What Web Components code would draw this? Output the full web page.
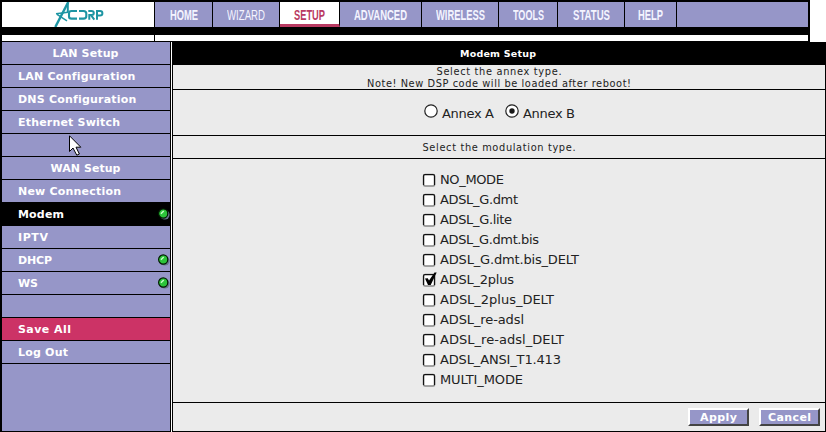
<!DOCTYPE html>
<html lang="en">
<head>
<meta charset="utf-8">
<title>Acorp - Modem Setup</title>
<style>
html,body{margin:0;width:826px;height:432px;overflow:hidden;background:#fff}
body{font-family:"DejaVu Sans",Verdana,sans-serif}
</style>
</head>
<body>
<router-page></router-page>
<script>
const define = (name, html, setup) => {
  const t = document.createElement('template');
  t.innerHTML = html;
  customElements.define(name, class extends HTMLElement {
    connectedCallback() {
      if (this.shadowRoot) return;
      this.attachShadow({mode: 'open'}).append(t.content.cloneNode(true));
      if (setup) setup(this, this.shadowRoot);
    }
  });
};

/* Text set to a fixed width: by tracking, or by condensing with the "narrow" attribute */
define('fit-text', `<style>
:host{display:inline-block;white-space:nowrap;text-align:left;flex:none}
span{display:inline-block;transform-origin:0 50%}
</style><span><slot></slot></span>`, (el, root) => {
  const w = +el.getAttribute('w'), s = root.querySelector('span');
  const n = s.getBoundingClientRect().width;
  if (el.hasAttribute('narrow')) s.style.transform = `scaleX(${w / n})`;
  else s.style.letterSpacing = `${(w - n) / Math.max(1, el.textContent.length - 1)}px`;
  el.style.width = w + 'px';
});

define('acorp-logo', `<style>:host{display:block;width:50px;height:25px}svg{display:block}</style>
<svg width="50" height="25" viewBox="54 2 50 25" fill="none" stroke="#1d95a3">
<path d="M68.3 2 55.3 27" stroke-width="2.4"/>
<path d="M67.8 3V12" stroke-width="2"/>
<path d="M56 13.8 68 12.2M57 14.4 67 20.8" stroke-width="1.5"/>
<path d="M77 11H71.5Q69 11 69 13.4V16.4Q69 18.6 71.5 18.6H77" stroke-width="2.1"/>
<path d="M79 11H83.5Q86.3 11 86.3 13.6V16.2Q86.3 18.6 83.5 18.6H79" stroke-width="2.1"/>
<path d="M89.3 19.8V15H91.7Q93.8 15 93.8 13T91.5 11H88.3M91 15.2 94.3 19.6" stroke-width="2"/>
<path d="M97 19.8V11H100Q102.4 11 102.4 13.2T100 15.4H97" stroke-width="2"/>
</svg>`);

define('nav-tab', `<style>
:host{display:flex;box-sizing:border-box;height:25px;border-right:1px solid #000;background:#9696c8;color:#f4f4ff;
font:bold 15.5px/25px "Liberation Sans",Arial,sans-serif;justify-content:center}
:host([light]){font-weight:normal}
:host([on]){background:#fff;color:#b93a62;border-bottom:3px solid #b93a62}
</style><slot></slot>`);

define('top-bar', `<style>
:host{display:block;box-sizing:border-box;width:810px;height:42px;background:#000;padding:2px 2px 0}
.bar{display:flex;height:25px}
.logo{width:152px;background:#fff;border-right:1px solid #000;display:flex}
acorp-logo{margin-left:52px}
.strip{display:flex;margin-top:8px;height:6px;gap:1px}
.strip i{background:#fff;width:152px}.strip i+i{flex:1;width:auto}
</style><div class="bar"><div class="logo"><acorp-logo></acorp-logo></div>
<nav-tab style="width:58px"><fit-text narrow w="28">HOME</fit-text></nav-tab>
<nav-tab light style="width:67px"><fit-text narrow w="38">WIZARD</fit-text></nav-tab>
<nav-tab on style="width:60px"><fit-text narrow w="31">SETUP</fit-text></nav-tab>
<nav-tab style="width:82px"><fit-text narrow w="53">ADVANCED</fit-text></nav-tab>
<nav-tab style="width:77px"><fit-text narrow w="49">WIRELESS</fit-text></nav-tab>
<nav-tab style="width:59px"><fit-text narrow w="31">TOOLS</fit-text></nav-tab>
<nav-tab style="width:67px"><fit-text narrow w="37">STATUS</fit-text></nav-tab>
<nav-tab style="width:52px"><fit-text narrow w="25">HELP</fit-text></nav-tab>
<nav-tab style="flex:1;border:0"></nav-tab></div>
<div class="strip"><i></i><i></i></div>`);

define('status-led', `<style>:host{display:block;width:12px;height:12px}svg{display:block}</style>
<svg width="12" height="12"><circle cx="6.8" cy="6.8" r="4.8" fill="#66758b"/><circle cx="5.2" cy="5.5" r="4.6" fill="#2cc43a" stroke="#001a00" stroke-width="1.2"/><path d="M2.9 5.7 5.7 3" stroke="#c9ffc9" stroke-width="1.4"/></svg>`);

define('menu-row', `<style>
:host{display:flex;box-sizing:border-box;height:23px;border-bottom:1px solid #000;padding:1px 0 0 16px;align-items:center;
color:#fff;font-weight:bold;font-size:11px;line-height:21px}
:host([head]){justify-content:center;padding:1px 1px 0 0}
:host([on]){background:#000}
:host([save]){background:#cc3366}
::slotted(status-led){margin:-1px 0 0 auto}
</style><slot></slot>`);

define('side-menu', `<style>
:host{display:block;box-sizing:border-box;width:171px;height:390px;border:solid #000;border-width:0 1px 1px 2px;background:#9696c8;position:relative}
svg{position:absolute;left:67px;top:93px}
</style>
<menu-row head><fit-text w="66">LAN Setup</fit-text></menu-row>
<menu-row><fit-text w="117">LAN Configuration</fit-text></menu-row>
<menu-row><fit-text w="118">DNS Configuration</fit-text></menu-row>
<menu-row><fit-text w="102">Ethernet Switch</fit-text></menu-row>
<menu-row></menu-row>
<menu-row head><fit-text w="70">WAN Setup</fit-text></menu-row>
<menu-row><fit-text w="103">New Connection</fit-text></menu-row>
<menu-row on><fit-text w="46">Modem</fit-text><status-led></status-led></menu-row>
<menu-row><fit-text w="30">IPTV</fit-text></menu-row>
<menu-row><fit-text w="34">DHCP</fit-text><status-led></status-led></menu-row>
<menu-row><fit-text w="20">WS</fit-text><status-led></status-led></menu-row>
<menu-row></menu-row>
<menu-row save><fit-text w="53">Save All</fit-text></menu-row>
<menu-row><fit-text w="50">Log Out</fit-text></menu-row>
<svg width="13" height="22"><path d="M.5 .8V16.5L4 13 7.8 20.2 10.4 19 7 12.2H11.8Z" fill="#fff" stroke="#000"/></svg>`);

define('radio-option', `<style>
:host{display:flex;align-items:center;font-size:13px;line-height:20px;color:#222;gap:4px}
svg{display:block;margin-bottom:6px}circle.dot{display:none}:host([checked]) .dot{display:block}
</style><svg width="14" height="14"><circle cx="7" cy="7" r="6.2" fill="#fff" stroke="#222" stroke-width="1.2"/><circle class="dot" cx="7" cy="7" r="2.7" fill="#1a1a1a"/></svg><slot></slot>`);

define('check-option', `<style>
:host{display:flex;align-items:center;font-size:13px;height:20px;line-height:20px;color:#222;gap:4px}
svg{display:block;overflow:visible}.tick{display:none}:host([checked]) .tick{display:block}
</style><svg width="14" height="14"><rect x="1.6" y="1.6" width="11" height="11.4" rx="1.5" fill="#fff" stroke="#888" stroke-width="1.6"/><path d="M1.5 12V3Q1.5 1.5 3 1.5H11Q12.5 1.5 12.5 3V12" fill="none" stroke="#111" stroke-width="1.1"/><path class="tick" d="M3 5.5 5.8 5.3 7 7.6 12.5 -.5H14.7L8.7 12H6Z" fill="#000"/></svg><slot></slot>`);

define('push-button', `<style>
:host{display:flex;box-sizing:border-box;width:61px;height:18px;border:2px solid;border-color:#fff #444 #444 #fff;
background:#9696c8;color:#fff;font-weight:bold;font-size:11px;line-height:15px;align-items:center;justify-content:center;padding-top:1px}
</style><slot></slot>`);

define('setup-panel', `<style>
:host{display:flex;flex-direction:column;box-sizing:border-box;width:654px;height:390px;border:solid #000;border-width:0 1px 1px 1px;background:#ebebeb;color:#222}
:host>div{box-sizing:border-box;border-bottom:1px solid #000;flex:none}
.title{height:23px;background:#000;color:#fff;font-weight:bold;font-size:9.5px;line-height:23px;text-align:center}
.title fit-text{margin-right:2px}
.note{height:25px;display:flex;flex-direction:column;align-items:center;font-size:9.8px;line-height:12px;padding-top:1px}
.radios{height:46px;display:flex;padding:3px 0 0 251px;gap:11px;align-items:center}
.sub{height:23px;font-size:9.8px;line-height:23px;text-align:center}
.modes{height:244px;padding:11px 0 0 249px}
:host>.foot{height:28px;display:flex;justify-content:flex-end;gap:10px;padding:5px 5px 0 0;border:0}
</style>
<div class="title"><fit-text w="76">Modem Setup</fit-text></div>
<div class="note"><fit-text w="125">Select the annex type.</fit-text><fit-text w="264">Note! New DSP code will be loaded after reboot!</fit-text></div>
<div class="radios"><radio-option><fit-text w="52">Annex A</fit-text></radio-option><radio-option checked><fit-text w="52">Annex B</fit-text></radio-option></div>
<div class="sub"><fit-text w="153">Select the modulation type.</fit-text></div>
<div class="modes">
<check-option><fit-text w="64">NO_MODE</fit-text></check-option>
<check-option><fit-text w="78">ADSL_G.dmt</fit-text></check-option>
<check-option><fit-text w="72">ADSL_G.lite</fit-text></check-option>
<check-option><fit-text w="99">ADSL_G.dmt.bis</fit-text></check-option>
<check-option><fit-text w="139">ADSL_G.dmt.bis_DELT</fit-text></check-option>
<check-option checked><fit-text w="74">ADSL_2plus</fit-text></check-option>
<check-option><fit-text w="114">ADSL_2plus_DELT</fit-text></check-option>
<check-option><fit-text w="84">ADSL_re-adsl</fit-text></check-option>
<check-option><fit-text w="124">ADSL_re-adsl_DELT</fit-text></check-option>
<check-option><fit-text w="121">ADSL_ANSI_T1.413</fit-text></check-option>
<check-option><fit-text w="83">MULTI_MODE</fit-text></check-option>
</div>
<div class="foot"><push-button><fit-text w="37">Apply</fit-text></push-button><push-button><fit-text w="43">Cancel</fit-text></push-button></div>`);

define('router-page', `<style>
:host{display:block;width:826px;height:432px;background:#fff}
main{display:flex;gap:1px}
</style><top-bar></top-bar><main><side-menu></side-menu><setup-panel></setup-panel></main>`);
</script>
</body>
</html>
